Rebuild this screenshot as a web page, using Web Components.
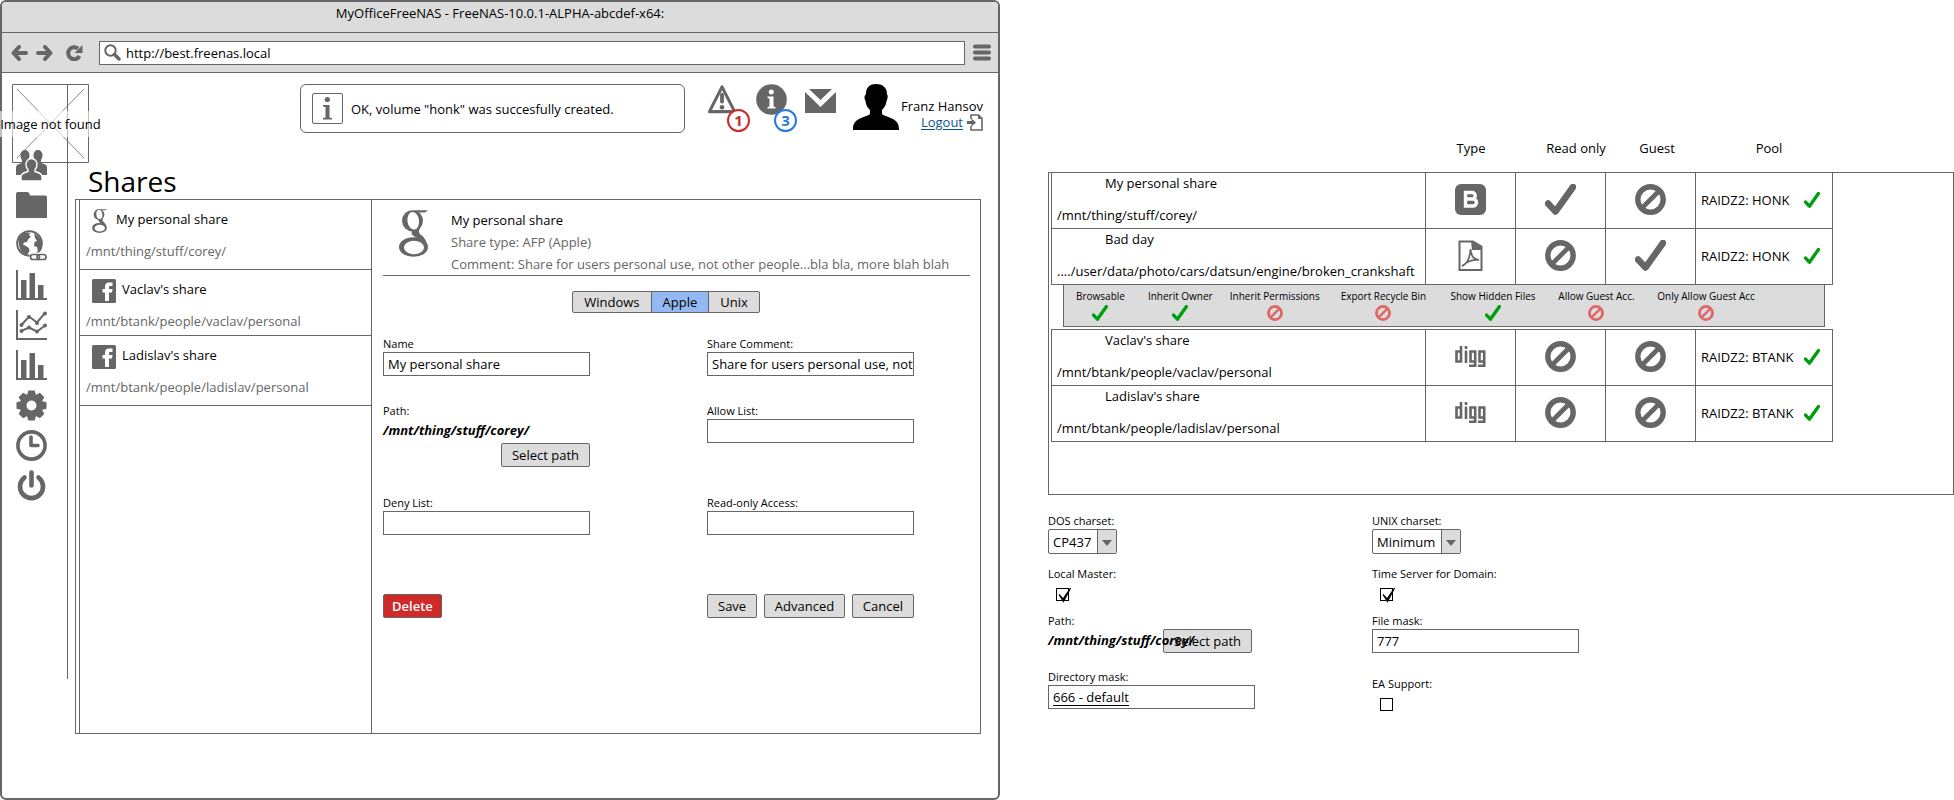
<!DOCTYPE html>
<html lang="en">
<head>
<meta charset="utf-8">
<title>MyOfficeFreeNAS - Shares</title>
<style>
  :root { --ink: #666; --panel: #dcdcdc; --green: #009e0f; --red: #cf2a27; --blue: #2b78e4; }
  body { margin: 0; background: #fff; color: #000; font: 13px/20px "Open Sans", "Noto Sans", sans-serif; }
</style>
</head>
<body>
<nas-page></nas-page>
<script>
const ICONS = {
  back: ['0 0 17 16', '<path d="M8 2 2.500 8 8 14M3 8h12" fill="none" stroke="currentColor" stroke-width="4" stroke-linecap="round" stroke-linejoin="round"/>'],
  forward: ['0 0 17 16', '<path d="M9 2l5.500 6L9 14M14 8H2" fill="none" stroke="currentColor" stroke-width="4" stroke-linecap="round" stroke-linejoin="round"/>'],
  reload: ['0 0 17 16', '<path d="M13.500 11A6 6 0 1 1 12 3.500" fill="none" stroke="currentColor" stroke-width="4"/><path d="M16.500 0v8H8.500z" fill="currentColor"/>'],
  search: ['0 0 17 17', '<circle cx="6.500" cy="6.500" r="5.200" fill="none" stroke="currentColor" stroke-width="2"/><path d="M10.500 10.500l4.500 4.500" stroke="currentColor" stroke-width="3.500" stroke-linecap="round"/>'],
  menu: ['0 0 18 17', '<path d="M2 2.500h14M2 8.500h14M2 14.500h14" stroke="currentColor" stroke-width="4" stroke-linecap="round"/>'],
  users: ['0 0 31 31', '<g fill="currentColor"><path d="M4.500 5a4.500 5 0 0 1 9 0c0 3-1 4-1.500 5v2l4 2v11H0v-7c0-3 2-4 6-5v-3c-1-1-1.500-3-1.500-5z"/><path d="M17.500 5a4.500 5 0 0 1 9 0c0 3-1 4-1.500 5v3c4 1 6 2 6 5v7H15V14l4-2v-2c-1-1-1.500-2-1.500-5z"/><path d="M10 14.500a5.500 6 0 0 1 11 0c0 2.500-1 4-2 5v2c4 1 7 2 7 5V31H5v-4.500c0-3 3-4 7-5v-2c-1-1-2-2.500-2-5z" stroke="#fff" stroke-width="1.400"/></g>'],
  folder: ['0 0 31 31', '<path d="M0 4a2 2 0 0 1 2-2h9q2 0 2.500 2l.5 1.500h15a2 2 0 0 1 2 2V28H0z" fill="currentColor"/>'],
  globe: ['0 0 31 31', '<circle cx="13.500" cy="13.500" r="12.300" fill="none" stroke="currentColor" stroke-width="2"/><path d="M3 8l5-5.500 6 .5-1 2.500 2 1-3 3-1 2.500-3 .5-1 2 2 1 4 2.500.5 3-2.500 4.500-6-4-2-6-.5-5zM18 3l5 4 3 6-1 7-3 2-1-5-3-1 .5-4 2.500-1-2-3z" fill="currentColor"/><g fill="none"><path d="M15 27a4 3 0 0 1 4-3h7a4 3 0 0 1 0 6h-7a4 3 0 0 1-4-3z" fill="#fff" stroke="#fff" stroke-width="3"/><rect x="14.500" y="24.500" width="9" height="5" rx="2.500" stroke="currentColor" stroke-width="1.700"/><rect x="21" y="24.500" width="9" height="5" rx="2.500" stroke="currentColor" stroke-width="1.700"/></g>'],
  bars: ['0 0 31 31', '<path d="M0 0h2v28h29v2H0zM5 10h5.500v18H5zM13.500 3h5.500v25h-5.500zM22 15h5.500v13H22z" fill="currentColor"/>'],
  lines: ['0 0 31 31', '<path d="M0 0h2v28h29v2H0z" fill="currentColor"/><path d="M5 15.500l8-9 8 6L29 3M5 21l8-3.500 8 4 8-6" fill="none" stroke="currentColor" stroke-width="2"/><g fill="currentColor"><circle cx="5.500" cy="15" r="2"/><circle cx="13" cy="7" r="2"/><circle cx="21" cy="13" r="2"/><circle cx="29" cy="3.500" r="2"/><circle cx="5.500" cy="21" r="2"/><circle cx="13" cy="17.500" r="2"/><circle cx="21" cy="21.500" r="2"/><circle cx="29" cy="15.500" r="2"/></g>'],
  gear: ['-15.500 -15.500 31 31', `<circle r="8.300" fill="none" stroke="currentColor" stroke-width="6.600"/><g fill="currentColor">${[0, 45, 90, 135, 180, 225, 270, 315].map(a => `<path d="M-4.500-10l1.300-5h6.400l1.300 5z" transform="rotate(${a})"/>`).join('')}</g>`],
  clock: ['0 0 31 31', '<circle cx="15.500" cy="15.500" r="13.600" fill="none" stroke="currentColor" stroke-width="3.600"/><path d="M15 7v8.500h7" fill="none" stroke="currentColor" stroke-width="3.600" stroke-linecap="round" stroke-linejoin="round"/>'],
  power: ['0 0 31 31', '<path d="M8.500 7.500a11.500 11.500 0 1 0 14 0" fill="none" stroke="currentColor" stroke-width="4.600" stroke-linecap="round"/><path d="M15.500 2.500v13" stroke="currentColor" stroke-width="4.600" stroke-linecap="round"/>'],
  notice: ['0 0 31 31', '<rect x=".5" y=".5" width="30" height="30" rx="1.500" fill="#fff" stroke="currentColor"/><circle cx="15.300" cy="6.500" r="2.600" fill="currentColor"/><path d="M11 12h6.500v12.500l2.500.5v1.500h-9V25l2.500-.5V14L11 13.500z" fill="currentColor"/>'],
  warning: ['0 0 32 32', '<path d="M15.500 3L2.500 28.500h26z" fill="none" stroke="currentColor" stroke-width="3.200" stroke-linejoin="round"/><path d="M15.500 11v7" stroke="currentColor" stroke-width="4" stroke-linecap="round"/><circle cx="15.500" cy="24" r="2.400" fill="currentColor"/>'],
  info: ['0 0 31 31', '<circle cx="15.500" cy="15.500" r="15.300" fill="currentColor"/><circle cx="15.300" cy="8" r="2.500" fill="#fff"/><path d="M11.500 12.500h6v10l2 .5v1.500h-8V23l2-.5v-8l-2-.5z" fill="#fff"/>'],
  mail: ['0 0 31 26', '<path d="M0 4l15.500 15L31 4v21H0zM4 1h23L15.500 12z" fill="currentColor"/>'],
  avatar: ['0 0 46 46', '<path d="M13 10C13 3 17 0 23 0s11 3 11 10c1 2 1 4-.5 7-.5 4-2 6-4.500 9v4c4 4 17 3 17 15v1H0v-1C0 33 13 34 17 30v-4c-3-3-4-5-4.500-9-1.500-3-1.500-5 .5-7z" fill="currentColor"/>'],
  exit: ['0 0 16 17', '<path d="M4 5V1h7.500L15 4.500V16H4v-4" fill="none" stroke="currentColor" stroke-width="1.600"/><path d="M11 1v4h4z" fill="currentColor"/><path d="M0 7h4.500V4.500L9 8.500 4.500 12.500V10H0z" fill="currentColor"/>'],
  google: ['0 0 29 47', '<g fill="currentColor"><ellipse cx="13.500" cy="10.800" rx="10.500" ry="10.600"/><ellipse cx="14.500" cy="37" rx="14.500" ry="9.800"/><path d="M14 19q-3 4 0 6.500l9 6 4.500 1.500q-1-5-6-8.500-3-2.500 0-7zM14 .3h15l-3 2.200h-6z"/></g><g fill="#fff"><ellipse cx="14.200" cy="10.800" rx="5.800" ry="8.800" transform="rotate(-8 14.200 10.800)"/><ellipse cx="15" cy="37.500" rx="10" ry="6.800"/></g>'],
  facebook: ['0 0 24 24', '<rect width="24" height="24" rx="1.500" fill="currentColor"/><path d="M13 22v-8.500h-2.500V10H13V7.500C13 5 14.500 3.500 17 3.500h3.500V7H18q-1 0-1 1v2h3.500l-.5 3.500h-3V22z" fill="#fff"/>'],
  bootstrap: ['0 0 31 31', '<rect width="31" height="31" rx="6" fill="currentColor"/><path d="M10.500 8.500h6.500a3 3 0 0 1 0 6.500h-6.500zM10.500 15h7.500a3.500 3.500 0 0 1 0 7h-7.500z" fill="none" stroke="#fff" stroke-width="3.400"/>'],
  pdf: ['0 0 31 31', '<path d="M4.500 1.500H18l8.500 5V30h-22z" fill="none" stroke="currentColor" stroke-width="2"/><path d="M16 1l10 6v3H17z" fill="currentColor"/><path d="M15.500 9c1 8 3 10 8.500 11-7-.5-11 1-17 6 5-2 8-8 8.500-17z" fill="none" stroke="currentColor" stroke-width="1.700"/>'],
  digg: ['0 0 31 31', '<g fill="none" stroke="currentColor" stroke-width="2.600"><path d="M6 5v15.500H1.500v-10H6M11 9.500V22M11 5v3M20.200 20.500h-4.700v-10h4.700v14.300H14M29.200 20.500h-4.700v-10h4.700v14.300H23"/></g>'],
  check: ['0 0 31 31', '<path d="M3 19.500l7.500 8L28 3" fill="none" stroke="currentColor" stroke-width="6.500" stroke-linecap="round" stroke-linejoin="round"/>'],
  deny: ['0 0 31 31', '<circle cx="15.500" cy="15.500" r="12.700" fill="none" stroke="currentColor" stroke-width="5.400"/><path d="M7 24L24 7" stroke="currentColor" stroke-width="4.600"/>'],
  tick: ['0 0 16 16', '<path d="M3 7.500l4 4.500 7.500-11-7 13.500z" fill="#000" stroke="#000" stroke-width="1.200"/>'],
  arrow: ['0 0 10 6', '<path d="M0 0h10L5 6z" fill="currentColor"/>']
};

/* Base class: renders the class's static markup into an open shadow root. */
class View extends HTMLElement {
  connectedCallback() {
    if (this.shadowRoot) return;
    const t = document.createElement('template');
    t.innerHTML = `<style>*{box-sizing:border-box}button,input,select{font:inherit;color:inherit;margin:0}${this.css()}</style>${this.html()}`;
    this.attachShadow({ mode: 'open' }).append(t.content.cloneNode(true));
  }
  a(name, fallback = '') { return this.getAttribute(name) ?? fallback; }
  css() { return ':host{display:block}'; }
  html() { return '<slot></slot>'; }
}

customElements.define('nas-icon', class extends View {
  css() {
    const w = this.a('w', '31'), h = this.a('h', w);
    return `:host{display:block;flex:none;width:${w}px;height:${h}px;color:var(--ink)}
      :host([tone=green]){color:var(--green)}:host([tone=soft-red]){color:#e06666}:host([tone=black]){color:#000}
      svg{display:block;width:100%;height:100%}`;
  }
  html() { const [box, body] = ICONS[this.a('name')]; return `<svg viewBox="${box}" aria-hidden="true">${body}</svg>`; }
});

customElements.define('nas-button', class extends View {
  css() {
    return `:host{display:block}
      button{display:block;height:24px;padding:0 10px;border:1px solid var(--ink);border-radius:2px;background:var(--panel);line-height:20px;white-space:nowrap}
      :host([danger]) button{background:var(--red);color:#fff;font-weight:600;padding:0 8px}`;
  }
  html() { return '<button type="button"><slot></slot></button>'; }
});

customElements.define('nas-field', class extends View {
  css() {
    return `:host{display:block}
      label{display:block;font-size:11px;line-height:16px;white-space:nowrap}
      input{display:block;width:100%;height:24px;padding:0 0 0 4px;border:1px solid var(--ink);border-radius:0;background:#fff;outline:0}
      :host([underlined]) input{text-decoration:underline;text-underline-offset:3px}`;
  }
  html() { return `<label for="f">${this.a('label')}</label><input id="f" type="text" value="${this.a('value')}">`; }
});

customElements.define('nas-select', class extends View {
  css() {
    return `:host{display:block}
      label{display:block;font-size:11px;line-height:16px}
      .box{display:inline-grid;grid-template-columns:auto 19px;border:1px solid var(--ink);border-radius:2px;height:25px}
      select{grid-area:1/1/2/3;appearance:none;border:0;background:none;padding:0 24px 0 4px;outline:0;height:23px}
      .arrow{grid-area:1/2;background:var(--panel);border-left:1px solid var(--ink);display:grid;place-items:center;pointer-events:none;padding-top:2px}`;
  }
  html() { return `<label for="s">${this.a('label')}</label><span class="box"><select id="s"><option>${this.a('value')}</option></select><span class="arrow"><nas-icon name="arrow" w="10" h="6"></nas-icon></span></span>`; }
});

customElements.define('nas-checkbox', class extends View {
  css() {
    return `:host{display:block}
      label{display:block;font-size:11px;line-height:16px;margin-bottom:5px}
      .box{display:grid;margin-left:8px;width:16px}
      input{grid-area:1/1;appearance:none;width:13px;height:13px;border:1px solid #000;background:#fff;margin-top:1px}
      nas-icon{grid-area:1/1;pointer-events:none}`;
  }
  html() {
    const on = this.hasAttribute('checked');
    return `<label for="c">${this.a('label')}</label><span class="box"><input id="c" type="checkbox"${on ? ' checked' : ''}>${on ? '<nas-icon name="tick" w="16" tone="black"></nas-icon>' : ''}</span>`;
  }
});

customElements.define('nas-path', class extends View {
  css() {
    return `:host{display:block}
      .label{font-size:11px;line-height:16px}
      .value{font-weight:700;font-style:italic;line-height:20px;margin-top:1px}
      nas-button{width:max-content;margin:3px 0 0 auto}
      :host([inline]) .row{display:grid;justify-items:start}
      :host([inline]) .value{grid-area:1/1;position:relative;z-index:1}
      :host([inline]) nas-button{grid-area:1/1;margin:0 0 0 115px}`;
  }
  html() { return `<div class="label">Path:</div><div class="row"><div class="value"><slot></slot></div><nas-button>Select path</nas-button></div>`; }
});

customElements.define('nas-toolbar', class extends View {
  css() {
    return `:host{display:block;background:var(--panel);border-bottom:1px solid var(--ink)}
      .title{line-height:22px;padding-bottom:8px;text-align:center;border-bottom:1px solid var(--ink)}
      nav{display:flex;align-items:center;height:39px;padding:0 7px 0 9px}
      button{border:0;background:none;padding:0;margin-right:8px}
      .reload{margin:0 16px 0 5px}
      .address{flex:1;display:flex;align-items:center;height:24px;background:#fff;border:1px solid var(--ink);padding-left:4px;gap:5px;margin-right:8px}
      input{flex:1;border:0;padding:0;outline:0;background:none}
      .menu{margin:0}`;
  }
  html() {
    return `<div class="title">MyOfficeFreeNAS - FreeNAS-10.0.1-ALPHA-abcdef-x64:</div>
    <nav><button aria-label="Back"><nas-icon name="back" w="17" h="16"></nas-icon></button>
    <button aria-label="Forward"><nas-icon name="forward" w="17" h="16"></nas-icon></button>
    <button class="reload" aria-label="Reload"><nas-icon name="reload" w="17" h="16"></nas-icon></button>
    <span class="address"><nas-icon name="search" w="17"></nas-icon><input type="text" aria-label="Address" value="http://best.freenas.local"></span>
    <button class="menu" aria-label="Menu"><nas-icon name="menu" w="18" h="17"></nas-icon></button></nav>`;
  }
});

customElements.define('nas-missing-image', class extends View {
  css() {
    return `:host{display:grid;grid-template-columns:77px;width:77px;height:79px;justify-content:center;justify-items:center;align-items:center}
      svg,span{grid-area:1/1}
      span{background:rgba(255,255,255,.6);line-height:26px;white-space:nowrap;width:max-content;justify-self:center}`;
  }
  html() {
    return `<svg width="77" height="79" aria-hidden="true"><g fill="none" stroke="#666"><path d="M.5.5h76v78H.5z"/><path d="M5 5l67 69M72 5L5 74" stroke-width=".8"/></g></svg><span>Image not found</span>`;
  }
});

customElements.define('nas-rail', class extends View {
  css() {
    return `:host{display:block;width:66px;flex:none;position:relative;border-right:1px solid var(--ink)}
      nas-missing-image{position:absolute;left:10px;top:0}
      nav{position:relative;display:grid;gap:9px;padding:66px 0 0 14px;justify-items:start}`;
  }
  html() {
    const items = [['users', 'Users'], ['folder', 'Storage'], ['globe', 'Network'], ['bars', 'Usage'], ['lines', 'Trends'], ['bars', 'Reports'], ['gear', 'Settings'], ['clock', 'Schedule'], ['power', 'Power']];
    return `<nas-missing-image></nas-missing-image><nav>${items.map(([i, n]) => `<a href="#${n.toLowerCase()}" aria-label="${n}"><nas-icon name="${i}"></nas-icon></a>`).join('')}</nav>`;
  }
});

customElements.define('nas-alert', class extends View {
  css() {
    return `:host{display:block;position:relative}
      b{position:absolute;left:var(--x,20px);top:25px;width:23px;height:23px;border:2px solid var(--tone);border-radius:50%;background:#fff;color:var(--tone);font:700 15px/19px "Open Sans",sans-serif;text-align:center}`;
  }
  html() { return `<nas-icon name="${this.a('icon')}"></nas-icon><b>${this.a('count')}</b>`; }
});

customElements.define('nas-header', class extends View {
  css() {
    return `:host{display:flex;height:49px;padding-left:225px}
      .message{flex:1;display:flex;align-items:center;gap:8px;padding-left:11px;border:1px solid var(--ink);border-radius:6px;margin-right:22px;white-space:nowrap}
      nas-alert{margin-right:18px}
      .warn{--tone:var(--red)}.note{--tone:var(--blue);--x:18px}
      .mail{margin:4px 17px 0 0}
      .user{margin-left:2px;text-align:right;line-height:16px;padding-top:14px;white-space:nowrap}
      .out{display:flex;justify-content:flex-end;gap:4px}
      a{color:#085394;text-underline-offset:2px}`;
  }
  html() {
    return `<div class="message" role="status"><nas-icon name="notice"></nas-icon><span>OK, volume "honk" was succesfully created.</span></div>
    <nas-alert class="warn" icon="warning" count="1"></nas-alert><nas-alert class="note" icon="info" count="3"></nas-alert>
    <nas-icon class="mail" name="mail" w="31" h="26"></nas-icon><nas-icon name="avatar" w="46" tone="black"></nas-icon>
    <div class="user"><div>Franz Hansov</div><div class="out"><a href="#logout">Logout</a><nas-icon name="exit" w="16" h="17"></nas-icon></div></div>`;
  }
});

customElements.define('nas-share-item', class extends View {
  css() {
    return `:host{display:block;border-bottom:1px solid var(--ink);padding:9px 0 0 6px}
      .head{display:flex;gap:6px;padding-left:6px;height:24px}
      .google{margin-right:3px}
      .path{color:var(--ink);margin-top:8px}`;
  }
  html() {
    const g = this.a('icon') === 'google';
    return `<div class="head"><nas-icon class="${this.a('icon')}" name="${this.a('icon')}" w="${g ? 15 : 24}" h="24"></nas-icon><span>${this.a('name')}</span></div><div class="path">${this.a('path')}</div>`;
  }
});

customElements.define('nas-share-detail', class extends View {
  css() {
    return `:host{display:block;padding:9px 10px 0 11px}
      header{display:flex;gap:23px;padding-left:16px;border-bottom:1px solid var(--ink);line-height:22px;white-space:nowrap}
      header nas-icon{margin-top:1px}
      header div div{color:var(--ink)}
      .tabs{display:flex;justify-content:center;padding-right:20px;margin:15px 0 23px}
      .tabs button{height:22px;line-height:18px;padding:0 11px;border:1px solid var(--ink);background:var(--panel);margin-left:-1px}
      .tabs button:first-child{border-radius:2px 0 0 2px}.tabs button:last-child{border-radius:0 2px 2px 0}
      .tabs [aria-selected=true]{background:#94b9f2}
      form{display:grid;grid-template-columns:1fr 1fr;grid-template-rows:67px 92px 99px auto;column-gap:117px;padding-right:56px}
      .actions{display:flex;justify-content:space-between}`;
  }
  html() {
    return `<header><nas-icon name="google" w="29" h="47"></nas-icon><div>My personal share<div>Share type: AFP (Apple)</div><div>Comment: Share for users personal use, not other people...bla bla, more blah blah</div></div></header>
    <div class="tabs" role="tablist"><button role="tab">Windows</button><button role="tab" aria-selected="true">Apple</button><button role="tab">Unix</button></div>
    <form><nas-field label="Name" value="My personal share"></nas-field><nas-field label="Share Comment:" value="Share for users personal use, not"></nas-field>
    <nas-path>/mnt/thing/stuff/corey/</nas-path><nas-field label="Allow List:"></nas-field>
    <nas-field label="Deny List:"></nas-field><nas-field label="Read-only Access:"></nas-field>
    <div class="actions"><nas-button danger>Delete</nas-button></div>
    <div class="actions"><nas-button>Save</nas-button><nas-button>Advanced</nas-button><nas-button>Cancel</nas-button></div></form>`;
  }
});

customElements.define('nas-window', class extends View {
  css() {
    return `:host{display:flex;flex-direction:column;border:2px solid var(--ink);border-radius:6px}
      nas-toolbar{border-radius:4px 4px 0 0}
      .body{flex:1;display:flex;padding-top:11px}
      nas-rail{margin-bottom:119px}
      main{flex:1;min-width:0;display:flex;flex-direction:column;padding:0 15px 64px 7px}
      h1{margin:30px 0 0;padding-left:13px;font-size:28px;font-weight:400;line-height:36px}
      .panel{flex:1;display:grid;grid-template-columns:293px 1fr;border:1px solid var(--ink);margin-right:2px;padding-left:3px}
      .list{display:grid;grid-template-rows:70px 66px 70px;border:1px solid var(--ink);border-width:0 1px}`;
  }
  html() {
    return `<nas-toolbar></nas-toolbar><div class="body"><nas-rail></nas-rail><main><nas-header></nas-header><h1>Shares</h1>
    <section class="panel"><div class="list">
      <nas-share-item icon="google" name="My personal share" path="/mnt/thing/stuff/corey/"></nas-share-item>
      <nas-share-item icon="facebook" name="Vaclav's share" path="/mnt/btank/people/vaclav/personal"></nas-share-item>
      <nas-share-item icon="facebook" name="Ladislav's share" path="/mnt/btank/people/ladislav/personal"></nas-share-item>
    </div><nas-share-detail></nas-share-detail></section></main></div>`;
  }
});

customElements.define('nas-share-options', class extends View {
  css() {
    return `:host{display:grid;grid-template-columns:72fr 82fr 111fr 110fr 108fr 99fr 167fr;margin:0 8px 2px 12px;height:42px;padding:3px 0 0 12px;background:var(--panel);border:1px solid var(--ink);border-top:0;font-size:10px;line-height:17px;justify-items:start}
      div{display:grid;justify-items:center;align-content:start;white-space:nowrap}`;
  }
  html() {
    return [['Browsable', 1], ['Inherit Owner', 1], ['Inherit Permissions', 0], ['Export Recycle Bin', 0], ['Show Hidden Files', 1], ['Allow Guest Acc.', 0], ['Only Allow Guest Acc', 0]]
      .map(([n, on]) => `<div><span>${n}</span><nas-icon name="${on ? 'check' : 'deny'}" tone="${on ? 'green' : 'soft-red'}" w="16"></nas-icon></div>`).join('');
  }
});

customElements.define('nas-share-table', class extends View {
  css() {
    return `:host{display:block}
      table{width:100%;table-layout:fixed;border-spacing:0;border-left:1px solid var(--ink)}
      :host([topped]) table{border-top:1px solid var(--ink)}
      .mark{width:90px}.pool{width:137px}
      td{height:56px;padding:0 0 2px;border:1px solid var(--ink);border-width:0 1px 1px 0}
      td:first-child{vertical-align:top}
      .name{padding-left:53px}.path{padding:12px 0 0 5px;white-space:nowrap}
      td nas-icon{margin:auto}
      .p{display:flex;align-items:center;justify-content:space-between;padding:0 12px 0 5px}
      .p nas-icon{margin:0}`;
  }
  html() {
    const mark = n => `<td><nas-icon name="${n}"></nas-icon></td>`;
    return `<table><colgroup><col><col class="mark"><col class="mark"><col class="mark"><col class="pool"></colgroup>${JSON.parse(this.a('rows')).map(([n, p, t, r, g, pool]) =>
      `<tr><td><div class="name">${n}</div><div class="path">${p}</div></td>${mark(t)}${mark(r)}${mark(g)}<td><div class="p"><span>RAIDZ2: ${pool}</span><nas-icon name="check" tone="green" w="16"></nas-icon></div></td></tr>`).join('')}</table>`;
  }
});

customElements.define('nas-overview', class extends View {
  css() {
    return `:host{display:block;padding-top:138px}
      .heads{display:grid;grid-template-columns:1fr 90px 120px 42px 182px;margin:0 94px 14px 0;text-align:center;white-space:nowrap}
      .frame{border:1px solid var(--ink);padding:0 120px 52px 2px}
      form{display:grid;grid-template-columns:324fr 582fr;margin-top:18px}
      .col{display:grid;grid-template-rows:53px 47px 56px auto;align-items:start}
      .col + .col{grid-template-rows:53px 47px 63px auto}
      nas-field{width:207px}`;
  }
  html() {
    const a = [['My personal share', '/mnt/thing/stuff/corey/', 'bootstrap', 'check', 'deny', 'HONK'], ['Bad day', '..../user/data/photo/cars/datsun/engine/broken_crankshaft', 'pdf', 'deny', 'check', 'HONK']];
    const b = [['Vaclav&#39;s share', '/mnt/btank/people/vaclav/personal', 'digg', 'deny', 'deny', 'BTANK'], ['Ladislav&#39;s share', '/mnt/btank/people/ladislav/personal', 'digg', 'deny', 'deny', 'BTANK']];
    return `<div class="heads"><span></span><span>Type</span><span>Read only</span><span>Guest</span><span>Pool</span></div>
    <div class="frame"><nas-share-table rows='${JSON.stringify(a)}'></nas-share-table><nas-share-options></nas-share-options><nas-share-table topped rows='${JSON.stringify(b)}'></nas-share-table></div>
    <form><div class="col"><nas-select label="DOS charset:" value="CP437"></nas-select><nas-checkbox label="Local Master:" checked></nas-checkbox><nas-path inline>/mnt/thing/stuff/corey/</nas-path><nas-field underlined label="Directory mask:" value="666 - default"></nas-field></div>
    <div class="col"><nas-select label="UNIX charset:" value="Minimum"></nas-select><nas-checkbox label="Time Server for Domain:" checked></nas-checkbox><nas-field label="File mask:" value="777"></nas-field><nas-checkbox label="EA Support:"></nas-checkbox></div></form>`;
  }
});

customElements.define('nas-page', class extends View {
  css() { return ':host{display:grid;grid-template-columns:minmax(0,1000fr) minmax(0,906fr);column-gap:48px;min-height:100vh}'; }
  html() { return '<nas-window></nas-window><nas-overview></nas-overview>'; }
});
</script>
</body>
</html>
